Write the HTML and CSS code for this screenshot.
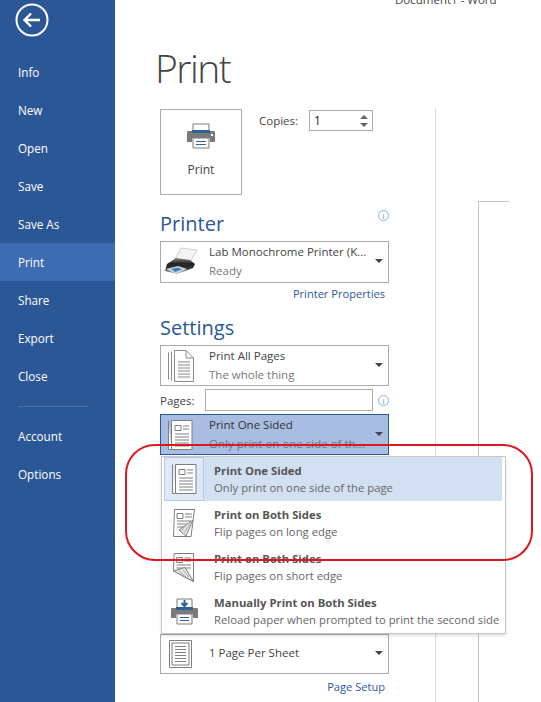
FILE: index.html
```html
<!DOCTYPE html>
<html lang="en">

<head>
    <meta charset="UTF-8">
    <title>Print - Document1 - Word</title>
    <link rel="stylesheet" href="styles.css">
</head>

<body>
    <div class="app">
        <aside class="sidebar">
            <div class="back">
                <svg width="34" height="34" viewBox="0 0 34 34">
                    <circle cx="17" cy="17" r="15.5" fill="none" stroke="#fff" stroke-width="2"/>
                    <path d="M9.5 17H25M16 10.5L9.5 17L16 23.5" fill="none" stroke="#fff" stroke-width="2.4"/>
                </svg>
            </div>
            <nav class="nav">
                <a>Info</a>
                <a>New</a>
                <a>Open</a>
                <a>Save</a>
                <a>Save As</a>
                <a class="active">Print</a>
                <a>Share</a>
                <a>Export</a>
                <a>Close</a>
                <div class="nav-sep"></div>
                <a>Account</a>
                <a>Options</a>
            </nav>
        </aside>

        <main class="main">
            <div class="doc-title">Document1 - Word</div>
            <h1>Print</h1>
            <div class="columns">
                <section class="settings">
                    <div class="print-row">
                        <button class="print-btn">
                            <svg width="30" height="26" viewBox="0 0 30 26">
                                <path d="M7 1H23V9H7Z" fill="#fff" stroke="#7a7a7a"/>
                                <path d="M2 8H28Q29 8 29 9V19H24V15H6V19H1V9Q1 8 2 8Z" fill="#7a7a7a"/>
                                <path d="M6 7H24V10H6Z" fill="#2f6199"/>
                                <path d="M7 15H23V25H7Z" fill="#fff" stroke="#7a7a7a"/>
                                <path d="M10 18.5H20M10 21.5H20" stroke="#2f6199"/>
                                <rect x="25" y="11" width="2" height="2" fill="#fff"/>
                            </svg>
                            <span>Print</span>
                        </button>
                        <label class="copies">Copies:
                            <span class="spin">1
                                <span class="spin-arrows"><i class="up"></i><i class="down"></i></span>
                            </span>
                        </label>
                    </div>

                    <h2 class="printer-head">Printer <span class="info"></span></h2>
                    <div class="dropdown printer">
                        <svg class="icon" width="36" height="30" viewBox="0 0 36 30">
                            <defs>
                                <linearGradient id="body" x1="0" y1="0" x2="0" y2="1">
                                    <stop offset="0" stop-color="#8a8a8a"/>
                                    <stop offset="0.35" stop-color="#222"/>
                                    <stop offset="0.65" stop-color="#333"/>
                                    <stop offset="1" stop-color="#bbb"/>
                                </linearGradient>
                            </defs>
                            <path d="M12 12L18 1L34 3L27 15Z" fill="#f4f4f4" stroke="#bbb" stroke-width="0.7"/>
                            <path d="M4 17L13 11L27 13L32 17L30 21L14 27L2 24Z" fill="url(#body)"/>
                            <path d="M3 22L15 19L24 22L13 27Z" fill="#c9d6e2"/>
                            <path d="M8 22L15 20.500L19 22.500L12 25Z" fill="#3f80b5"/>
                        </svg>
                        <div class="dd-text">
                            <div class="dd-title">Lab Monochrome Printer (K...</div>
                            <div class="dd-sub">Ready</div>
                        </div>
                        <i class="caret"></i>
                    </div>
                    <a class="link">Printer Properties</a>

                    <h2 class="settings-head">Settings</h2>
                    <div class="dropdown">
                        <svg class="icon" width="26" height="32" viewBox="0 0 26 32" fill="none" stroke="#8a8a8a">
                            <path d="M.5 2.5V29.5M3.5 1.5V30.5"/>
                            <path d="M6.5 .5H18L25.5 8V31.5H6.5Z" fill="#fff"/>
                            <path d="M18 .5V8H25.5M10 12H22M10 15H22M10 18H22M10 21H22M10 24H22M10 27H22"/>
                        </svg>
                        <div class="dd-text">
                            <div class="dd-title">Print All Pages</div>
                            <div class="dd-sub">The whole thing</div>
                        </div>
                        <i class="caret"></i>
                    </div>

                    <div class="pages-row">
                        <span class="pages-label">Pages:</span>
                        <span class="pages-input"></span>
                        <span class="info"></span>
                    </div>

                    <div class="sided-wrap">
                        <div class="dropdown selected">
                            <svg class="icon" width="25" height="30" viewBox="0 0 25 30" fill="#fff" stroke="#7f7f7f">
                                <path d="M.5 .5V29.5H3.5M3.5 .5H24V29.5H3.5Z"/>
                                <path d="M7 5.5H13V10.5H7ZM15 6H21M15 9H21M7 14H21M7 17H21M7 20H21M7 23H21M7 26H21" fill="none"/>
                            </svg>
                            <div class="dd-text">
                                <div class="dd-title">Print One Sided</div>
                                <div class="dd-sub">Only print on one side of th...</div>
                            </div>
                            <i class="caret"></i>
                        </div>

                        <div class="popup">
                            <div class="popup-row current">
                                <div class="popup-icon">
                                    <svg width="25" height="30" viewBox="0 0 25 30" fill="#fff" stroke="#7f7f7f">
                                        <path d="M.5 .5V29.5H3.5M3.5 .5H24V29.5H3.5Z"/>
                                        <path d="M7 5.5H13V10.5H7ZM15 6H21M15 9H21M7 14H21M7 17H21M7 20H21M7 23H21M7 26H21" fill="none"/>
                                    </svg>
                                </div>
                                <div class="popup-text">
                                    <div class="popup-title">Print One Sided</div>
                                    <div class="popup-sub">Only print on one side of the page</div>
                                </div>
                            </div>
                            <div class="popup-row">
                                <div class="popup-icon">
                                    <svg width="22" height="28" viewBox="0 0 22 28" fill="none" stroke="#7f7f7f">
                                        <path d="M1.500 .5H21.500L18 27.500H.5Z" fill="#fff"/>
                                        <path d="M4 4.500H10V9.500H4ZM12 5H19M12 8H19M4 12H18M4 15H15M4 18H11"/>
                                        <path d="M20 11L13 27L6 21Z" fill="#e6e6e6"/>
                                        <path d="M17 15L11 24M14 15L8.500 22" stroke="#aaa"/>
                                    </svg>
                                </div>
                                <div class="popup-text">
                                    <div class="popup-title">Print on Both Sides</div>
                                    <div class="popup-sub">Flip pages on long edge</div>
                                </div>
                            </div>
                            <div class="popup-row">
                                <div class="popup-icon">
                                    <svg width="22" height="29" viewBox="0 0 22 29" fill="none" stroke="#7f7f7f">
                                        <path d="M1 .5H20.500V28.500L.5 18Z" fill="#fff"/>
                                        <path d="M3.500 4.500H9.500V9.500H3.500ZM11.500 5H18M11.500 8H18M3.500 12H18M3.500 15H18"/>
                                        <path d="M.5 18L12 14.500L20.500 28.500Z" fill="#e6e6e6"/>
                                        <path d="M6 18L13 24M10 17L16 24" stroke="#aaa"/>
                                    </svg>
                                </div>
                                <div class="popup-text">
                                    <div class="popup-title">Print on Both Sides</div>
                                    <div class="popup-sub">Flip pages on short edge</div>
                                </div>
                            </div>
                            <div class="popup-row">
                                <div class="popup-icon">
                                    <svg width="29" height="27" viewBox="0 0 29 27">
                                        <path d="M7 1H22V11H7Z" fill="#fff" stroke="#7a7a7a"/>
                                        <path d="M14.500 2V7M11.500 5L14.500 8L17.500 5" fill="none" stroke="#2f6199" stroke-width="2"/>
                                        <path d="M2 10H27Q28 10 28 11V20H23V16H6V20H1V11Q1 10 2 10Z" fill="#7a7a7a"/>
                                        <path d="M6 9H23V12H6Z" fill="#2f6199"/>
                                        <path d="M7 16H22V26H7Z" fill="#fff" stroke="#7a7a7a"/>
                                        <path d="M10 19.500H19M10 22.500H19" stroke="#2f6199"/>
                                    </svg>
                                </div>
                                <div class="popup-text">
                                    <div class="popup-title">Manually Print on Both Sides</div>
                                    <div class="popup-sub">Reload paper when prompted to print the second side</div>
                                </div>
                            </div>
                        </div>

                        <div class="callout"></div>
                    </div>

                    <div class="dropdown per-sheet">
                        <svg class="icon" width="23" height="28" viewBox="0 0 23 28" fill="#fff" stroke="#7f7f7f">
                            <path d="M.5 .5H22.500V27.500H.5Z"/>
                            <path d="M3 3H20V25H3ZM6 6.500H17M6 9.500H17M6 12.500H17M6 15.500H17M6 18.500H17M6 21.500H17" fill="none"/>
                        </svg>
                        <div class="dd-text">
                            <div class="dd-title">1 Page Per Sheet</div>
                        </div>
                        <i class="caret"></i>
                    </div>
                    <a class="link">Page Setup</a>
                </section>

                <section class="preview">
                    <div class="page"></div>
                </section>
            </div>
        </main>
    </div>
</body>

</html>
```

FILE: styles.css
```css
/* Reset & Global Styling */
* {
    margin: 0;
    padding: 0;
    box-sizing: border-box;
}

body {
    font-family: 'Open Sans', 'Noto Sans', sans-serif;
    font-size: 11.5px;
    color: #444;
    background-color: #fff;
    overflow: hidden;
}

.app {
    display: flex;
    width: 541px;
    height: 702px;
    overflow: hidden;
}

/* Sidebar */
.sidebar {
    width: 115px;
    flex-shrink: 0;
    background-color: #2b5797;
}

.back {
    height: 53px;
    padding: 3px 0 0 15px;
}

.nav a {
    display: block;
    height: 38px;
    line-height: 38px;
    padding-left: 18px;
    font-size: 11.7px;
    color: #fff;
}

.nav a.active {
    background-color: #3e6cb3;
}

.nav-sep {
    width: 70px;
    height: 1px;
    margin: 11px 0 10px 18px;
    background-color: #4a73ae;
}

/* Main area */
.main {
    flex: 1;
    min-width: 0;
}

.doc-title {
    height: 6px;
    margin-left: 280px;
    font-size: 11.5px;
    line-height: 10px;
    white-space: nowrap;
    overflow: visible;
    transform: translateY(-5px);
}

h1 {
    height: 102px;
    padding: 37px 0 0 40px;
    font-size: 39px;
    font-weight: 300;
    line-height: 50px;
    letter-spacing: -1.5px;
    color: #444;
}

.columns {
    display: flex;
    height: 594px;
}

.settings {
    width: 321px;
    padding-left: 45px;
    border-right: 1px solid #dcdcdc;
}

.print-row {
    display: flex;
    height: 87px;
    padding-top: 1px;
}

.print-btn {
    display: flex;
    flex-direction: column;
    align-items: center;
    width: 82px;
    height: 86px;
    padding-top: 13px;
    font-family: inherit;
    font-size: 12px;
    color: #444;
    background-color: #fff;
    border: 1px solid #ababab;
}

.print-btn span {
    margin-top: 12px;
}

.copies {
    display: flex;
    align-items: flex-start;
    gap: 11px;
    height: 22px;
    margin: 1px 0 0 17px;
    line-height: 22px;
}

.spin {
    display: flex;
    justify-content: space-between;
    width: 64px;
    height: 21px;
    padding: 0 4px;
    font-size: 12px;
    line-height: 20px;
    color: #222;
    border: 1px solid #ababab;
}

.spin-arrows {
    display: flex;
    flex-direction: column;
    gap: 4px;
    padding-top: 4px;
}

.spin-arrows i {
    width: 0;
    height: 0;
    border-left: 4px solid transparent;
    border-right: 4px solid transparent;
}

.spin-arrows .up {
    border-bottom: 4px solid #666;
}

.spin-arrows .down {
    border-top: 4px solid #666;
}

h2 {
    display: flex;
    justify-content: space-between;
    width: 229px;
    font-size: 20px;
    font-weight: 400;
    line-height: 28px;
    color: #2b579a;
}

.printer-head {
    height: 46px;
    padding-top: 15px;
}

.printer-head .info {
    margin-top: 0;
}

.info {
    display: block;
    flex-shrink: 0;
    width: 11px;
    height: 11px;
    font-size: 8px;
    font-weight: 400;
    line-height: 9px;
    text-align: center;
    color: #5a8ac0;
    border: 1px solid #8fb0d3;
    border-radius: 50%;
}

.info::before {
    content: "i";
    display: block;
}

.dropdown {
    display: flex;
    align-items: center;
    position: relative;
    width: 229px;
    height: 41px;
    padding-left: 7px;
    background-color: #fff;
    border: 1px solid #ababab;
}

.dropdown.printer {
    height: 42px;
    padding-left: 2px;
}

.dropdown .icon {
    flex-shrink: 0;
}

.dd-text {
    position: absolute;
    left: 48px;
    top: 0;
    white-space: nowrap;
}

.dd-title {
    height: 19px;
    line-height: 19px;
    color: #444;
}

.dd-sub {
    height: 19px;
    line-height: 19px;
    color: #777;
}

.caret {
    position: absolute;
    right: 5px;
    top: 17px;
    width: 0;
    height: 0;
    border-left: 4px solid transparent;
    border-right: 4px solid transparent;
    border-top: 4px solid #444;
}

.link {
    display: block;
    width: 225px;
    height: 22px;
    font-size: 11.1px;
    line-height: 22px;
    text-align: right;
    color: #2b579a;
}

.settings-head {
    height: 31px;
    margin-top: 9px;
}

.pages-row {
    display: flex;
    align-items: center;
    width: 229px;
    height: 28px;
}

.pages-label {
    width: 45px;
}

.pages-input {
    width: 168px;
    height: 22px;
    border: 1px solid #ababab;
}

.pages-row .info {
    margin-left: 5px;
}

.sided-wrap {
    position: relative;
    height: 220px;
}

.dropdown.selected {
    height: 41px;
    background-color: #a9bde3;
    border-color: #2b579a;
}

.selected .dd-title {
    color: #333;
}

.selected .dd-sub {
    color: #6d7484;
}

.popup {
    position: absolute;
    left: 1px;
    top: 42px;
    z-index: 2;
    width: 345px;
    height: 178px;
    padding: 0 3px 0 2px;
    font-size: 11.3px;
    background-color: #fff;
    border: 1px solid #c6c6c6;
    box-shadow: 0 2px 3px rgba(0, 0, 0, 0.12);
}

.popup-row {
    display: flex;
    align-items: center;
    height: 44px;
    white-space: nowrap;
}

.popup-row.current {
    background-color: #d3e0f1;
}

.popup-icon {
    display: flex;
    flex-shrink: 0;
    justify-content: center;
    align-items: center;
    width: 40px;
    height: 44px;
    margin-right: 10px;
}

.current .popup-icon {
    background-color: #dfe8f5;
    border: 1px solid #b5cae6;
}

.popup-title {
    height: 17px;
    line-height: 17px;
    font-weight: 700;
    color: #555;
}

.popup-sub {
    height: 17px;
    line-height: 17px;
    color: #666;
}

.callout {
    position: absolute;
    left: -35px;
    top: 30px;
    z-index: 3;
    width: 408px;
    height: 117px;
    border: 2px solid #d81920;
    border-radius: 30px;
}

.per-sheet {
    height: 40px;
    margin-bottom: 2px;
    padding-left: 8px;
}

.per-sheet .dd-text {
    top: 8px;
}

.per-sheet .caret {
    top: 16px;
}

/* Preview */
.preview {
    flex: 1;
    padding: 93px 0 0 42px;
}

.page {
    width: 31px;
    height: 100%;
    border-top: 1px solid #c4c4c4;
    border-left: 1px solid #c4c4c4;
}
```
